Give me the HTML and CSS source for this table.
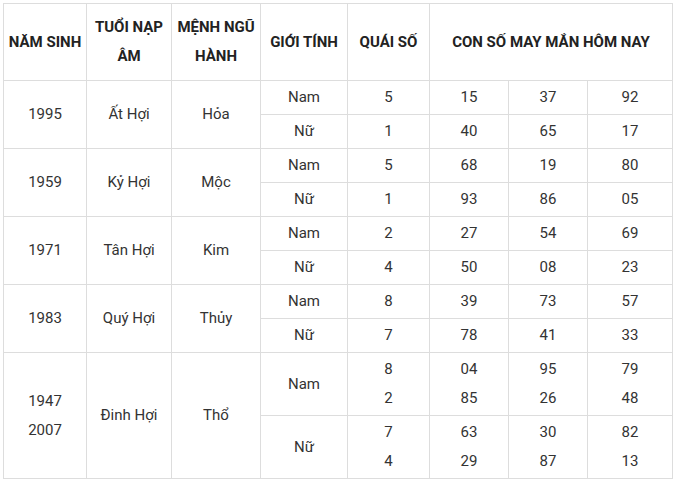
FILE: index.html
```html
<!DOCTYPE html>
<html lang="vi">
<head>
<meta charset="utf-8">
<title>Con số may mắn</title>
<link rel="stylesheet" href="styles.css">
</head>
<body>
<div class="wrap">
<table class="lucky">
  <colgroup>
    <col class="c1"><col class="c2"><col class="c3"><col class="c4"><col class="c5"><col class="c6"><col class="c7"><col class="c8">
  </colgroup>
  <thead>
    <tr class="head">
      <th>NĂM SINH</th>
      <th>TUỔI NẠP<br>ÂM</th>
      <th>MỆNH NGŨ<br>HÀNH</th>
      <th>GIỚI TÍNH</th>
      <th>QUÁI SỐ</th>
      <th colspan="3">CON SỐ MAY MẮN HÔM NAY</th>
    </tr>
  </thead>
  <tbody>
    <tr class="r"><td rowspan="2">1995</td><td rowspan="2">Ất Hợi</td><td rowspan="2">Hỏa</td><td>Nam</td><td>5</td><td>15</td><td>37</td><td>92</td></tr>
    <tr class="r"><td>Nữ</td><td>1</td><td>40</td><td>65</td><td>17</td></tr>
    <tr class="r"><td rowspan="2">1959</td><td rowspan="2">Kỷ Hợi</td><td rowspan="2">Mộc</td><td>Nam</td><td>5</td><td>68</td><td>19</td><td>80</td></tr>
    <tr class="r"><td>Nữ</td><td>1</td><td>93</td><td>86</td><td>05</td></tr>
    <tr class="r"><td rowspan="2">1971</td><td rowspan="2">Tân Hợi</td><td rowspan="2">Kim</td><td>Nam</td><td>2</td><td>27</td><td>54</td><td>69</td></tr>
    <tr class="r"><td>Nữ</td><td>4</td><td>50</td><td>08</td><td>23</td></tr>
    <tr class="r"><td rowspan="2">1983</td><td rowspan="2">Quý Hợi</td><td rowspan="2">Thủy</td><td>Nam</td><td>8</td><td>39</td><td>73</td><td>57</td></tr>
    <tr class="r"><td>Nữ</td><td>7</td><td>78</td><td>41</td><td>33</td></tr>
    <tr class="r2"><td rowspan="2">1947<br>2007</td><td rowspan="2">Đinh Hợi</td><td rowspan="2">Thổ</td><td>Nam</td><td>8<br>2</td><td>04<br>85</td><td>95<br>26</td><td>79<br>48</td></tr>
    <tr class="r2"><td>Nữ</td><td>7<br>4</td><td>63<br>29</td><td>30<br>87</td><td>82<br>13</td></tr>
  </tbody>
</table>
</div>
</body>
</html>
```

FILE: styles.css
```css
html, body {
  margin: 0;
  padding: 0;
  background: #fff;
}
.wrap {
  padding: 3px 0 0 3px;
}
.lucky {
  border-collapse: collapse;
  table-layout: fixed;
  width: 669px;
  font-family: Roboto, "Liberation Sans", sans-serif;
  font-size: 15px;
  color: #333;
}
.c1 { width: 83px; }
.c2 { width: 85px; }
.c3 { width: 89px; }
.c4 { width: 87px; }
.c5 { width: 82px; }
.c6 { width: 79px; }
.c7 { width: 79px; }
.c8 { width: 85px; }
.lucky th,
.lucky td {
  border: 1px solid #dddddd;
  text-align: center;
  vertical-align: middle;
  padding: 0;
  line-height: 29px;
}
.lucky th {
  font-weight: bold;
  color: #222;
}
.head { height: 77px; }
.r { height: 34px; }
.r2 { height: 63px; }
```
